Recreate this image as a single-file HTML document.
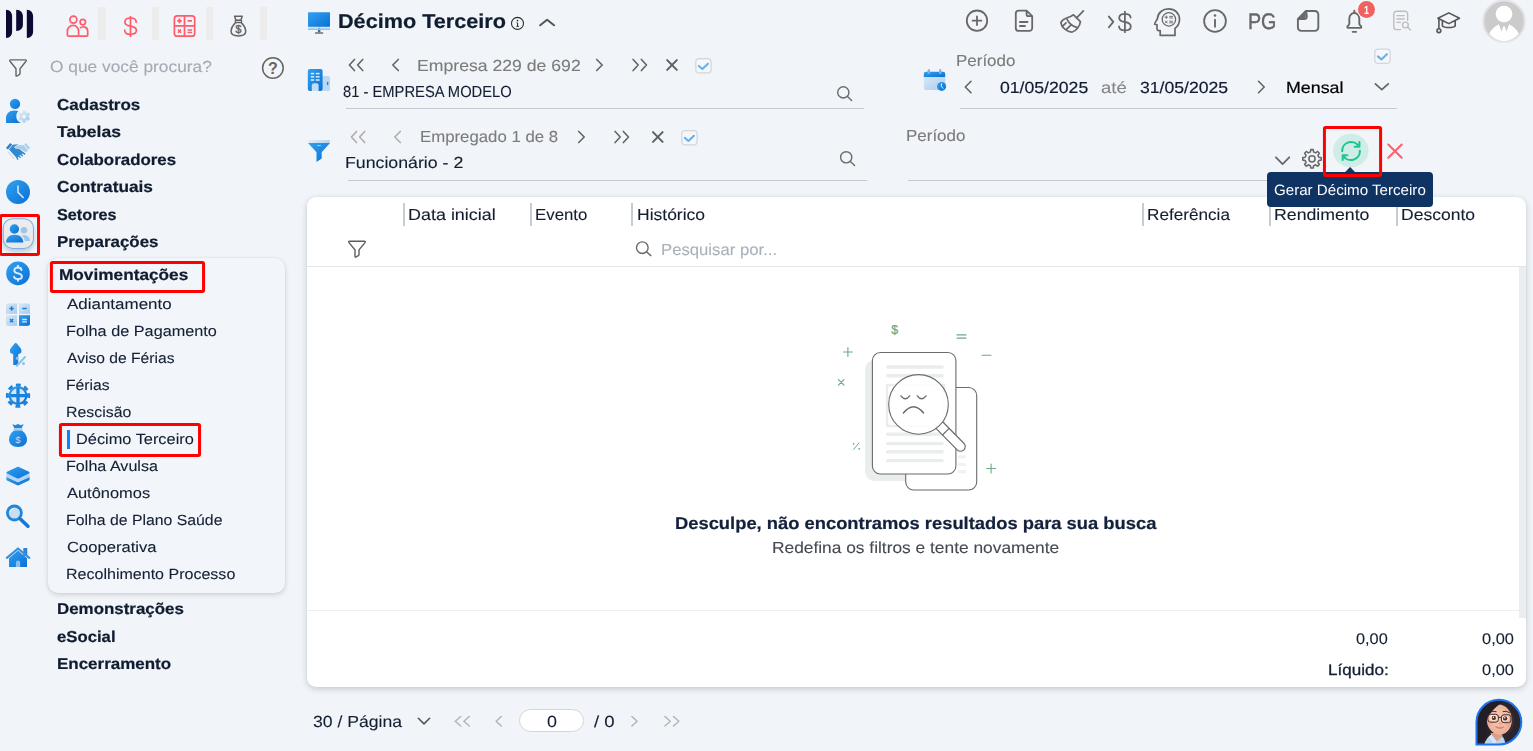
<!DOCTYPE html>
<html><head><meta charset="utf-8"><title>Décimo Terceiro</title>
<style>
html,body{margin:0;padding:0;}
body{width:1533px;height:751px;overflow:hidden;background:#f1f5f9;position:relative;font-family:"Liberation Sans",sans-serif;}
.t{text-rendering:geometricPrecision;position:absolute;white-space:nowrap;transform-origin:0 50%;z-index:4;display:block;}
</style></head><body>
<div style="position:absolute;left:47.8px;top:258px;width:237.70px;height:335.00px;background:#f2f5fa;border-radius:10px;box-shadow:0 2px 5px rgba(30,40,60,.16),0 0 2px rgba(30,40,60,.08);"></div>
<div style="position:absolute;left:307px;top:197px;width:1219.00px;height:489.50px;background:#fff;border-radius:9px;box-shadow:0 2px 6px rgba(20,30,45,.2),0 0 2px rgba(20,30,45,.06);"></div>
<div style="position:absolute;left:307px;top:266px;width:1219.00px;height:1.00px;background:#e3e6ea;"></div>
<div style="position:absolute;left:307px;top:610px;width:1212.30px;height:1.00px;background:#eceef1;"></div>
<div style="position:absolute;left:1519.3px;top:267px;width:6.70px;height:351.00px;background:#ebedf0;"></div>
<div style="position:absolute;left:403.1px;top:203.1px;width:1.80px;height:22.70px;background:#c8ccd2;"></div>
<div style="position:absolute;left:530.1px;top:203.1px;width:1.80px;height:22.70px;background:#c8ccd2;"></div>
<div style="position:absolute;left:630.9px;top:203.1px;width:1.80px;height:22.70px;background:#c8ccd2;"></div>
<div style="position:absolute;left:1142.1px;top:203.1px;width:1.80px;height:22.70px;background:#c8ccd2;"></div>
<div style="position:absolute;left:1269.0px;top:203.1px;width:1.80px;height:22.70px;background:#c8ccd2;"></div>
<div style="position:absolute;left:1396.3px;top:203.1px;width:1.80px;height:22.70px;background:#c8ccd2;"></div>
<div style="position:absolute;left:346px;top:108px;width:517.60px;height:1.00px;background:#c6cbd1;"></div>
<div style="position:absolute;left:348px;top:180px;width:518.60px;height:1.00px;background:#c6cbd1;"></div>
<div style="position:absolute;left:960px;top:108px;width:437.00px;height:1.00px;background:#c6cbd1;"></div>
<div style="position:absolute;left:908px;top:180px;width:419.00px;height:1.00px;background:#c6cbd1;"></div>
<div style="position:absolute;left:66.9px;top:430px;width:3.10px;height:18.70px;background:#0a86fa;"></div>




<div style="position:absolute;left:1267.3px;top:172.4px;width:165.70px;height:34.80px;background:#0f3363;border-radius:4px;z-index:5;"></div>
<div style="position:absolute;left:519.2px;top:709.3px;width:65.20px;height:23.20px;box-sizing:border-box;background:#fff;border:1px solid #d2d6db;border-radius:12px;"></div>
<svg width="1533" height="751" viewBox="0 0 1533 751" style="position:absolute;left:0;top:0;z-index:3;overflow:visible">
<defs>
 <linearGradient id="gb" x1="0" y1="0" x2="1" y2="1"><stop offset="0" stop-color="#31a2ef"/><stop offset="1" stop-color="#0a70d6"/></linearGradient>
 <linearGradient id="gl" x1="0" y1="0" x2="1" y2="1"><stop offset="0" stop-color="#d9e8f7"/><stop offset="1" stop-color="#a9cbeb"/></linearGradient>
 <linearGradient id="gl2" x1="0" y1="0" x2="1" y2="1"><stop offset="0" stop-color="#e2eef9"/><stop offset="1" stop-color="#a4c8e8"/></linearGradient>
 <linearGradient id="gt" x1="0" y1="0" x2="0" y2="1"><stop offset="0" stop-color="#ebedee"/><stop offset="1" stop-color="#e6e8ea"/></linearGradient>
 <filter id="sh" x="-30%" y="-30%" width="160%" height="180%"><feDropShadow dx="0" dy="2.5" stdDeviation="2.2" flood-color="#000" flood-opacity=".2"/></filter>
</defs>
<!-- logo -->
<g fill="#0c0a33">
 <path d="M6,9.8 C10.2,9.8 12.1,13.2 12.1,16.5 V31.5 C12.1,34.8 10.2,38 6,38 Z"/>
 <path d="M16.2,9.8 C20.8,9.8 22.9,13.2 22.9,16.5 V24.5 C22.9,27.8 20.8,31 16.2,31 Z"/>
 <path d="M26.8,9.8 C31,9.8 33.1,13.2 33.1,16.5 V31.5 C33.1,34.8 31,38 26.8,38 Z"/>
</g>
<!-- separators -->
<g fill="#ececec"><rect x="97.9" y="7" width="8" height="32.8"/><rect x="152" y="7" width="7" height="32.8"/><rect x="206" y="7" width="7.1" height="32.8"/><rect x="259.9" y="7" width="7" height="32.8"/></g>
<!-- red people -->
<g fill="none" stroke="#ff5b6b" stroke-width="1.7" stroke-linejoin="round">
 <circle cx="73.4" cy="19.6" r="3.5"/>
 <path d="M67.4,35 V31 a5.6,5.6 0 0 1 11.2,0 V35 a1.2,1.2 0 0 1 -1.2,1.2 H68.6 a1.2,1.2 0 0 1 -1.2,-1.2 Z"/>
 <circle cx="82.8" cy="22.1" r="2.7"/>
 <path d="M78.6,36.2 H86.5 a1.2,1.2 0 0 0 1.2,-1.2 V31.2 a4.4,4.4 0 0 0 -7.6,-3"/>
</g>
<!-- red dollar -->
<g fill="none" stroke="#ff5b6b" stroke-width="1.7" stroke-linecap="round">
 <path d="M136.2,22.2 C136.2,19.6 133.8,18 130.5,18 C127.2,18 124.9,19.7 124.9,22.2 C124.9,24.7 127.2,25.6 130.5,26.1 C133.8,26.6 136.4,27.7 136.4,30.3 C136.4,32.8 133.8,34.3 130.5,34.3 C127.2,34.3 124.7,32.8 124.7,30.2"/>
 <path d="M130.5,16.7 V36.2"/>
</g>
<!-- red calculator -->
<g fill="none" stroke="#ff5b6b" stroke-width="1.7">
 <rect x="174.4" y="15.9" width="20.3" height="20.3" rx="2.8"/>
 <path d="M184.5,15.9 V36.2 M174.4,25.9 H194.7"/>
 <path d="M177.2,20.9 H181.8 M179.5,18.6 V23.2 M187.6,20.9 H192" stroke-width="1.9"/>
 <path d="M177.9,29.4 L181.1,32.8 M181.1,29.4 L177.9,32.8 M187.5,30.1 H192.1 M187.5,32.4 H192.1" stroke-width="1.5"/>
</g>
<!-- grey money bag -->
<g fill="none" stroke="#646464" stroke-width="1.5" stroke-linejoin="round">
 <path d="M235.7,22.6 C233,25 231.1,28.5 231.1,31.6 C231.1,34.8 233.7,35.9 238.4,35.9 C243.1,35.9 245.7,34.8 245.7,31.6 C245.7,28.5 243.8,25 241.1,22.6 Z"/>
 <path d="M235.9,20.3 L234.6,16.3 H242.2 L240.9,20.3 Z"/>
 <path d="M235.3,20.4 H241.5 V22.5 H235.3 Z" stroke-width="1.2"/>
</g>
<text x="238.4" y="33.4" font-family="Liberation Sans, sans-serif" font-size="10.6" fill="#646464" stroke="#646464" stroke-width=".45" text-anchor="middle">$</text>
<!-- filter outline left -->
<path transform="translate(9,59.1)" d="M1.6,0.8 H16.4 Q17.8,0.8 17,2.1 L11,9.6 V14.4 Q11,15.2 10.3,15.6 L8.1,16.9 Q7,17.4 7,16.3 V9.6 L1,2.1 Q0.2,0.8 1.6,0.8 Z" fill="none" stroke="#646464" stroke-width="1.4" stroke-linejoin="round"/>
<!-- help -->
<circle cx="272.9" cy="68" r="10.3" fill="none" stroke="#646464" stroke-width="1.5"/>
<text x="272.9" y="73.7" font-family="Liberation Sans, sans-serif" font-size="16" font-weight="700" fill="#646464" text-anchor="middle">?</text>

<!-- person gear -->
<circle cx="15" cy="103.9" r="5.15" fill="url(#gb)"/>
<path d="M6,123 V118 C6,113.8 9.4,110.4 14,110.4 C15.8,110.4 17.2,110.6 18.3,111.1 C17,112.6 16.3,114.4 16.3,116.6 C16.3,119.6 18.2,122 21,123 Z" fill="url(#gb)"/>
<path d="M25.37,120.50 L25.23,122.19 L22.97,122.19 L22.83,120.50 L21.36,119.65 L19.82,120.37 L18.70,118.42 L20.09,117.45 L20.09,115.75 L18.70,114.78 L19.82,112.83 L21.36,113.55 L22.83,112.70 L22.97,111.01 L25.23,111.01 L25.37,112.70 L26.84,113.55 L28.38,112.83 L29.50,114.78 L28.11,115.75 L28.11,117.45 L29.50,118.42 L28.38,120.37 L26.84,119.65 Z" fill="url(#gl2)" stroke="url(#gl2)" stroke-width="1" stroke-linejoin="round"/><circle cx="24.1" cy="116.6" r="1.9" fill="#f1f5f9"/>
<!-- handshake -->
<g>
 <path d="M6,148 L10.2,143 L12.2,144.6 L8,149.6 Z" fill="#2580d3"/>
 <path d="M24.2,144.5 L25.7,143 L30.2,148 L28.6,149.6 Z" fill="#a9cfea"/>
 <path d="M14.2,147.2 L18.8,145 L23.8,145.3 L28.1,150.2 L25.8,152.2 L20,149 L16,148.6 Z" fill="#a9cfea"/>
 <path d="M9,149.6 L12.8,144.7 L18.4,144.2 L14,147 L15.2,148.5 L19.6,149.2 L25.6,153.8 L24.8,154.9 L22.4,153.4 L21.6,154.2 L23.2,155.8 L22.4,156.8 L20,154.8 L19.4,155.6 L21,157.4 L20.2,158.2 L18.2,156.4 L17.8,157.2 L18.4,159.4 L17.4,160 L16,157.2 Z" fill="#3189d2"/>
 <path d="M8.6,152.6 L9.6,154 M10.6,154.8 L11.6,156.2 M12.8,157 L13.8,158.4" stroke="#c6dff2" stroke-width="1.3" stroke-linecap="round"/>
</g>
<!-- clock -->
<circle cx="18" cy="192" r="12" fill="url(#gb)"/>
<path d="M18,186 V192.4 L23.2,197.5" fill="none" stroke="#cfe4f7" stroke-width="1.6" stroke-linecap="round" stroke-linejoin="round"/>
<!-- selected tile -->
<rect x="3.2" y="218.7" width="30.3" height="29.8" rx="9.5" fill="url(#gt)" stroke="#74b3e8" stroke-width="1.1" filter="url(#sh)"/>
<circle cx="14.4" cy="229" r="4.7" fill="url(#gb)"/>
<path d="M6,242.6 C6,238 9,234.7 14.6,234.7 C20.2,234.7 23.3,238 23.3,242.6 Z" fill="url(#gb)"/>
<circle cx="24" cy="230.3" r="3.3" fill="#9cc6ea"/>
<path d="M21.6,235.7 C22.6,235.3 23.6,235.2 24.6,235.2 C28,235.2 30,237.8 30,241 H24.8 C24.7,239 23.6,237 21.6,235.7 Z" fill="#9cc6ea"/>
<!-- dollar circle -->
<circle cx="18" cy="273.4" r="11.8" fill="url(#gb)"/>
<g fill="none" stroke="#dcedfb" stroke-width="1.9" stroke-linecap="round"><path d="M21.5,270 C21.2,268.3 19.8,267.5 18,267.5 C15.8,267.5 14.3,268.7 14.3,270.5 C14.3,272.4 15.8,273 18,273.4 C20.4,273.9 21.9,274.7 21.9,276.5 C21.9,278.2 20.2,279.1 18,279.1 C15.9,279.1 14.4,278.3 14,276.8"/><path d="M18,265.8 V267.5 M18,279.1 V280.8"/></g>
<!-- blue calculator -->
<clipPath id="calc"><rect x="6" y="303.2" width="24" height="22.7" rx="2.6"/></clipPath>
<g clip-path="url(#calc)"><rect x="6" y="303.2" width="11" height="10.7" fill="url(#gl)"/><rect x="19" y="303.2" width="11" height="10.7" fill="url(#gl)"/>
<rect x="6" y="315.2" width="11" height="10.7" fill="url(#gl)"/><rect x="19" y="315.2" width="11" height="10.7" fill="url(#gb)"/></g>
<path d="M9.4,308.5 H13.8 M11.6,306.3 V310.7 M22.3,308.5 H26.7 M10,319 L13.2,322.2 M13.2,319 L10,322.2" stroke="#1a7fd8" stroke-width="1.4" fill="none"/>
<path d="M22.2,319.5 H26.8 M22.2,321.9 H26.8" stroke="#dcebf8" stroke-width="1.4"/>
<!-- arrow up percent -->
<path d="M15.7,343 C16.2,343 17,343.6 17.6,344.4 L20.8,348.6 C21.3,349.3 21.4,349.8 21.4,350.6 V351.6 C21.4,352.6 20.8,353.2 19.8,353.6 L18.2,354.3 V364.9 H13.2 V354.3 L11.6,353.6 C10.6,353.2 10,352.6 10,351.6 V350.6 C10,349.8 10.1,349.3 10.6,348.6 L13.8,344.4 C14.4,343.6 15.2,343 15.7,343 Z" fill="url(#gb)"/>
<path d="M25,357 L16.9,365.7" stroke="#8ec3ea" stroke-width="2.1" stroke-linecap="round"/><circle cx="17.3" cy="358.2" r="1.5" fill="#8ec3ea"/><circle cx="23.5" cy="363.5" r="1.5" fill="#8ec3ea"/>
<!-- gear cross -->
<g transform="translate(18,395.6)"><circle r="10.6" fill="none" stroke="#1f86de" stroke-width="3.2" stroke-dasharray="4.7 3.625" transform="rotate(-12.7)"/><circle r="9.5" fill="url(#gb)"/><circle r="7.3" fill="#d6e7f7"/><path d="M0,-7.8 V7.8 M-7.8,0 H7.8" stroke="#1b80dc" stroke-width="3.3"/></g>
<!-- blue money bag -->
<path d="M12.4,424 L14.3,428.2 H21.7 L23.6,424 L20.9,425.3 L18,424 L15.1,425.3 Z" fill="#1f86de"/>
<rect x="13.7" y="428.3" width="8.6" height="2.1" fill="#a9cbeb"/>
<path d="M14,430.5 C10.6,433 9,436.5 9,439.6 C9,444.6 13,447 18,447 C23,447 27,444.6 27,439.6 C27,436.5 25.4,433 22,430.5 Z" fill="url(#gb)"/>
<text x="18" y="443" font-family="Liberation Sans, sans-serif" font-size="9.5" fill="#bfdaf3" text-anchor="middle">$</text>
<!-- layers -->
<path d="M6.4,476.8 L18,482.2 L29.6,476.8 V479.6 C29.6,480 29.4,480.3 29,480.5 L18.8,485.3 C18.3,485.5 17.7,485.5 17.2,485.3 L7,480.5 C6.6,480.3 6.4,480 6.4,479.6 Z" fill="url(#gb)"/>
<path d="M6.4,473.4 L18,478.8 L29.6,473.4 V476.9 L18,482.3 L6.4,476.9 Z" fill="#b4d4ef"/>
<path d="M17.2,467 C17.7,466.8 18.3,466.8 18.8,467 L29,471.8 C29.8,472.2 29.8,473.2 29,473.6 L18.8,478.4 C18.3,478.6 17.7,478.6 17.2,478.4 L7,473.6 C6.2,473.2 6.2,472.2 7,471.8 Z" fill="url(#gb)"/>
<!-- search blue -->
<circle cx="14.4" cy="513" r="7" fill="#c9def3" stroke="#1f86de" stroke-width="2.8"/>
<path d="M20.6,519.2 L27.9,526.2" stroke="#1478da" stroke-width="3.6" stroke-linecap="round"/>
<path d="M10.6,511.5 C11,510 12,509.2 13,508.8" stroke="#fff" stroke-width="1" fill="none" stroke-linecap="round"/>
<!-- home -->
<rect x="23.3" y="548" width="4" height="8" fill="#2f86d6"/>
<path d="M9,558.2 L18,550.6 L27,558.2 V567 H9 Z" fill="url(#gb)"/>
<path d="M6.9,557.9 L18,548.5 L29.3,557.9" fill="none" stroke="#3a8fdc" stroke-width="2.2" stroke-linecap="round" stroke-linejoin="round"/>
<path d="M15.9,567 V562.6 a2.1,2.1 0 0 1 4.2,0 V567 Z" fill="#8fbfe9"/>
<linearGradient id="gm" x1="0" y1="0" x2="0" y2="1"><stop offset="0" stop-color="#e6f0f9"/><stop offset="1" stop-color="#86bbe8"/></linearGradient><rect x="308" y="12.2" width="22" height="14.8" rx=".8" fill="url(#gb)"/><rect x="308" y="26.8" width="22" height="3.2" fill="url(#gm)"/><rect x="318.4" y="27.8" width="1.4" height="1" fill="#3f9ae6"/><rect x="317.9" y="30" width="2.5" height="2.4" fill="#4f6c6e"/><rect x="315" y="32.2" width="8.2" height="1.6" rx=".3" fill="#5d7778"/><circle cx="517.5" cy="23.4" r="6" fill="none" stroke="#2b2b2b" stroke-width="1.1"/><circle cx="517.5" cy="20.6" r=".85" fill="#2b2b2b"/><path d="M516.6,22.9 H517.6 V26.3 M516.4,26.4 H518.8" stroke="#2b2b2b" stroke-width="1" fill="none"/><path d="M540.15,25.30 L547.10,19.70 L554.05,25.30" fill="none" stroke="#555" stroke-width="2" stroke-linecap="round" stroke-linejoin="round"/><rect x="322" y="76" width="8" height="15" rx="1.6" fill="#bdd8f2"/><rect x="326.9" y="81.8" width="1.4" height="3.2" fill="#1f86de"/><rect x="307.8" y="68.9" width="14.8" height="22.1" rx="2" fill="url(#gb)"/><rect x="310.8" y="72.8" width="3.4" height="1.6" fill="#d6e8f8"/><rect x="315.8" y="72.8" width="3.8" height="1.6" fill="#d6e8f8"/><rect x="310.8" y="76" width="3.4" height="1.6" fill="#d6e8f8"/><rect x="315.8" y="76" width="3.8" height="1.6" fill="#d6e8f8"/><rect x="310.8" y="79.2" width="3.4" height="1.6" fill="#d6e8f8"/><rect x="315.8" y="79.2" width="3.8" height="1.6" fill="#d6e8f8"/><path d="M311.8,91 V85.6 a2.4,2.4 0 0 1 2.4,-2.4 H316.2 a2.4,2.4 0 0 1 2.4,2.4 V91 Z" fill="#c5ddf4"/><path d="M354.47,59.45 L349.40,65.00 L354.47,70.55 M362.70,59.45 L357.62,65.00 L362.70,70.55" fill="none" stroke="#646464" stroke-width="1.6" stroke-linecap="round" stroke-linejoin="round"/><path d="M398.30,59.45 L392.80,65.00 L398.30,70.55" fill="none" stroke="#646464" stroke-width="1.6" stroke-linecap="round" stroke-linejoin="round"/><path d="M596.70,59.45 L602.20,65.00 L596.70,70.55" fill="none" stroke="#646464" stroke-width="1.6" stroke-linecap="round" stroke-linejoin="round"/><path d="M633.10,59.45 L638.22,65.00 L633.10,70.55 M641.38,59.45 L646.50,65.00 L641.38,70.55" fill="none" stroke="#646464" stroke-width="1.6" stroke-linecap="round" stroke-linejoin="round"/><path d="M667.2,60.1 L676.8,69.9 M676.8,60.1 L667.2,69.9" fill="none" stroke="#5e5e5e" stroke-width="2" stroke-linecap="round" stroke-linejoin="round"/><rect x="695.80" y="58.66" width="15.3" height="14.3" rx="3.4" fill="#f4f7fb" stroke="#d3d5d8" stroke-width="1.2"/><path d="M698.90,65.96 L702.40,68.96 L707.90,63.76" fill="none" stroke="#66b1ea" stroke-width="2.1" stroke-linecap="round" stroke-linejoin="round"/><circle cx="843.3" cy="92.4" r="5.6" fill="none" stroke="#6a6a6a" stroke-width="1.4"/><path d="M847.2597979746446,96.35979797464468 L851.6,100.6" fill="none" stroke="#6a6a6a" stroke-width="1.4" stroke-linecap="round" stroke-linejoin="round"/><path d="M356.47,131.45 L351.40,137.00 L356.47,142.55 M364.70,131.45 L359.62,137.00 L364.70,142.55" fill="none" stroke="#adadad" stroke-width="1.6" stroke-linecap="round" stroke-linejoin="round"/><path d="M400.30,131.45 L394.80,137.00 L400.30,142.55" fill="none" stroke="#adadad" stroke-width="1.6" stroke-linecap="round" stroke-linejoin="round"/><path d="M578.70,131.45 L584.20,137.00 L578.70,142.55" fill="none" stroke="#646464" stroke-width="1.6" stroke-linecap="round" stroke-linejoin="round"/><path d="M615.10,131.45 L620.22,137.00 L615.10,142.55 M623.38,131.45 L628.50,137.00 L623.38,142.55" fill="none" stroke="#646464" stroke-width="1.6" stroke-linecap="round" stroke-linejoin="round"/><path d="M653,132.1 L662.6,141.9 M662.6,132.1 L653,141.9" fill="none" stroke="#5e5e5e" stroke-width="2" stroke-linecap="round" stroke-linejoin="round"/><rect x="681.80" y="130.66" width="15.3" height="14.3" rx="3.4" fill="#f4f7fb" stroke="#d3d5d8" stroke-width="1.2"/><path d="M684.90,137.96 L688.40,140.96 L693.90,135.76" fill="none" stroke="#66b1ea" stroke-width="2.1" stroke-linecap="round" stroke-linejoin="round"/><circle cx="846.2" cy="157.3" r="5.6" fill="none" stroke="#6a6a6a" stroke-width="1.4"/><path d="M850.1597979746447,161.25979797464467 L854.6,165.6" fill="none" stroke="#6a6a6a" stroke-width="1.4" stroke-linecap="round" stroke-linejoin="round"/><linearGradient id="gf" x1="0" y1="0" x2="1" y2="0"><stop offset="0" stop-color="#e4eff9"/><stop offset="1" stop-color="#b2d3ee"/></linearGradient><rect x="308" y="140.1" width="22" height="3" fill="url(#gf)"/><path d="M308,143 H330 L321.7,152.2 V158.4 L316.5,162 V152.2 Z" fill="url(#gb)"/><rect x="317.2" y="145" width="3.6" height="1.1" fill="#9fcbee"/><rect x="927.6" y="69.1" width="2.4" height="4.8" rx="1" fill="#8cbce2"/><rect x="939" y="69.1" width="2.4" height="4.8" rx="1" fill="#8cbce2"/><path d="M923.8,77.2 V73.8 a2.1,2.1 0 0 1 2.1,-2.1 H943.1 a2.1,2.1 0 0 1 2.1,2.1 V77.2 Z" fill="url(#gb)"/><path d="M923.8,77.2 H945.2 V88 a2,2 0 0 1 -2,2 H925.8 a2,2 0 0 1 -2,-2 Z" fill="url(#gl)"/><rect x="927.6" y="71.7" width="2.4" height="2.2" fill="#7fb4e0"/><rect x="939" y="71.7" width="2.4" height="2.2" fill="#7fb4e0"/><circle cx="941.6" cy="86.4" r="4.5" fill="url(#gb)"/><path d="M941.4,83.8 V86.6 L943.2,88.3" stroke="#e6f2fc" stroke-width="1" fill="none" stroke-linecap="round"/><path d="M971.00,81.25 L965.30,87.00 L971.00,92.75" fill="none" stroke="#646464" stroke-width="1.6" stroke-linecap="round" stroke-linejoin="round"/><path d="M1258.50,81.25 L1264.20,87.00 L1258.50,92.75" fill="none" stroke="#646464" stroke-width="1.6" stroke-linecap="round" stroke-linejoin="round"/><path d="M1375.35,83.90 L1381.80,89.70 L1388.25,83.90" fill="none" stroke="#646464" stroke-width="1.7" stroke-linecap="round" stroke-linejoin="round"/><rect x="1374.80" y="49.10" width="15.3" height="14.3" rx="3.4" fill="#f4f7fb" stroke="#d3d5d8" stroke-width="1.2"/><path d="M1377.90,56.40 L1381.40,59.40 L1386.90,54.20" fill="none" stroke="#66b1ea" stroke-width="2.1" stroke-linecap="round" stroke-linejoin="round"/><path d="M1275.95,157.30 L1282.60,164.10 L1289.25,157.30" fill="none" stroke="#686868" stroke-width="1.8" stroke-linecap="round" stroke-linejoin="round"/><path d="M1318.81,157.22 L1321.22,157.61 L1321.22,160.09 L1318.81,160.48 L1317.97,162.51 L1319.39,164.49 L1317.64,166.24 L1315.66,164.82 L1313.63,165.66 L1313.24,168.07 L1310.76,168.07 L1310.37,165.66 L1308.34,164.82 L1306.36,166.24 L1304.61,164.49 L1306.03,162.51 L1305.19,160.48 L1302.78,160.09 L1302.78,157.61 L1305.19,157.22 L1306.03,155.19 L1304.61,153.21 L1306.36,151.46 L1308.34,152.88 L1310.37,152.04 L1310.76,149.63 L1313.24,149.63 L1313.63,152.04 L1315.66,152.88 L1317.64,151.46 L1319.39,153.21 L1317.97,155.19 Z" fill="none" stroke="#6a6a6a" stroke-width="1.6" stroke-linecap="round" stroke-linejoin="round"/><circle cx="1312" cy="158.85" r="3.1" fill="none" stroke="#6a6a6a" stroke-width="1.6"/><ellipse cx="1350.85" cy="150.55" rx="17.8" ry="16.7" fill="#cfede6"/><path d="M1342.2,151.2 A8.9,8.9 0 0 1 1358.9,146.6 M1359.4,142 V146.7 H1354.7 M1359.9,150.8 A8.9,8.9 0 0 1 1343.2,155.4 M1342.7,160 V155.3 H1347.4" fill="none" stroke="#1fc590" stroke-width="2.1" stroke-linecap="round" stroke-linejoin="round"/><path d="M1388.3,144.5 L1401.7,157.7 M1401.7,144.5 L1388.3,157.7" fill="none" stroke="#ff616c" stroke-width="2.1" stroke-linecap="round" stroke-linejoin="round"/><circle cx="977" cy="20.7" r="10.2" fill="none" stroke="#686868" stroke-width="1.8"/><path d="M972.6,20.7 H981.4 M977,16.3 V25.1" fill="none" stroke="#686868" stroke-width="1.8" stroke-linecap="round" stroke-linejoin="round"/><path d="M1018.8,10.6 H1026.6 L1032.2,16.2 V27.9 a3,3 0 0 1 -3,3 H1018.8 a3,3 0 0 1 -3,-3 V13.6 a3,3 0 0 1 3,-3 Z M1026.6,10.6 V14.2 a2,2 0 0 0 2,2 H1032.2 M1019.9,22 H1027.6 M1019.9,26 H1025" fill="none" stroke="#686868" stroke-width="1.8" stroke-linecap="round" stroke-linejoin="round"/><path d="M1083.4,10.9 L1076.4,18.2 M1073.6,14.8 L1080.4,21.6 C1080,26.2 1076,31 1071.8,32.2 C1067,31.8 1061.6,27.8 1060.8,22.6 C1062,20.2 1064.2,18.8 1066.6,18 C1069.2,17.2 1071.6,16.2 1073.6,14.8 Z M1066.6,18 C1068,22.2 1072,26 1076.8,27.4 M1063.2,25.6 L1066,22.8 M1066.4,29.4 L1070.6,25.4" fill="none" stroke="#686868" stroke-width="1.7" stroke-linecap="round" stroke-linejoin="round"/><path d="M1108.90,16.55 L1113.30,21.90 L1108.90,27.25" fill="none" stroke="#686868" stroke-width="1.9" stroke-linecap="round" stroke-linejoin="round"/><path d="M1130.6,17.6 C1130.6,15.2 1128.2,13.8 1124.9,13.8 C1121.6,13.8 1119.2,15.4 1119.2,17.9 C1119.2,20.4 1121.6,21.4 1124.9,22 C1128.2,22.6 1130.8,23.8 1130.8,26.4 C1130.8,28.9 1128.2,30.4 1124.9,30.4 C1121.6,30.4 1119,28.9 1119,26.3 M1124.9,11.6 V32.2" fill="none" stroke="#686868" stroke-width="1.8" stroke-linecap="round" stroke-linejoin="round"/><path d="M1160.2,35.4 V30.6 H1158.6 a1.6,1.6 0 0 1 -1.6,-1.6 V24.8 L1154.6,24.2 C1154.4,23.4 1156.6,20.6 1157.4,18.6 C1158,12.6 1162.6,8.9 1168.6,8.9 C1175,8.9 1179.5,13.6 1179.5,19.4 C1179.5,23.4 1177.6,26.4 1175,28.4 V35.4 Z" fill="none" stroke="#686868" stroke-width="1.7" stroke-linecap="round" stroke-linejoin="round"/><circle cx="1168.9" cy="19.4" r="6.7" fill="none" stroke="#686868" stroke-width="1.3"/><path d="M1165,17.2 H1167.6 M1166.3,15.9 V18.5 M1169.6,16.4 H1172.6 M1169.6,18 H1172.6 M1165.3,21 L1167.3,23 M1167.3,21 L1165.3,23 M1169.6,21.2 H1172.6 M1169.6,22.8 H1172.6" fill="none" stroke="#686868" stroke-width="0.9" stroke-linecap="round" stroke-linejoin="round"/><circle cx="1215" cy="21" r="10.9" fill="none" stroke="#686868" stroke-width="1.8"/><circle cx="1215" cy="15.6" r="1.25" fill="#686868"/><path d="M1215,19.6 V26.8" fill="none" stroke="#686868" stroke-width="1.9" stroke-linecap="round" stroke-linejoin="round"/><path d="M1305.9,11 H1314.9 a3.4,3.4 0 0 1 3.4,3.4 V27.5 a3.4,3.4 0 0 1 -3.4,3.4 H1301.3 a3.4,3.4 0 0 1 -3.4,-3.4 V19 Z M1306.2,11.4 L1306.8,16.4 a2.6,2.6 0 0 1 -2.6,2.6 H1298.2" fill="none" stroke="#686868" stroke-width="1.9" stroke-linecap="round" stroke-linejoin="round"/><path d="M1299.4,18.2 L1305.6,12 L1305.9,16.2 a1.9,1.9 0 0 1 -1.9,1.9 Z" fill="#686868"/><path d="M1354.3,10.6 V12 M1349.3,24 V18.6 a5,5.6 0 0 1 10,0 V24 C1359.3,25.3 1361.3,25.8 1361.3,27 C1361.3,27.6 1360.9,27.9 1360.3,27.9 H1348.3 C1347.7,27.9 1347.3,27.6 1347.3,27 C1347.3,25.8 1349.3,25.3 1349.3,24" fill="none" stroke="#686868" stroke-width="1.9" stroke-linecap="round" stroke-linejoin="round"/><path d="M1352.6,31.8 H1356.2" fill="none" stroke="#686868" stroke-width="1.8" stroke-linecap="round" stroke-linejoin="round"/><circle cx="1366.5" cy="9.5" r="9.6" fill="#f5f8fb"/><circle cx="1366.5" cy="9.5" r="8.5" fill="#f0615f"/><path d="M1407.6,20.4 V13.8 a2.6,2.6 0 0 0 -2.6,-2.6 H1396.4 a2.6,2.6 0 0 0 -2.6,2.6 V27 a2.6,2.6 0 0 0 2.6,2.6 H1400.6 M1397,15.6 H1404.2 M1397,19 H1404.2 M1397,22.4 H1400.4" fill="none" stroke="#bdbdbd" stroke-width="1.4" stroke-linecap="round" stroke-linejoin="round"/><circle cx="1405.4" cy="25" r="2.9" fill="none" stroke="#bdbdbd" stroke-width="1.4"/><path d="M1407.450609665441,27.050609665440987 L1410.4,30" fill="none" stroke="#bdbdbd" stroke-width="1.4" stroke-linecap="round" stroke-linejoin="round"/><path d="M1437.9,18.2 L1448.8,12.9 L1459.5,18.2 L1448.8,23.6 Z M1442.4,20.8 V26 C1444.2,28 1453.4,28 1455.2,26 V20.8 M1438.9,18.9 V28.4" fill="none" stroke="#555" stroke-width="1.6" stroke-linecap="round" stroke-linejoin="round"/><circle cx="1438.9" cy="30.7" r="1.9" fill="none" stroke="#555" stroke-width="1.6"/><circle cx="1504" cy="21.2" r="20.8" fill="#cbcbcb" stroke="#e3e4e5" stroke-width="2"/><circle cx="1504" cy="14.1" r="8.3" fill="#fff"/><path d="M1489.3,33.2 C1491.5,29.4 1495,26.2 1498.8,24.2 L1501.6,31.8 L1502.8,27.6 L1504,25.8 L1505.2,27.6 L1506.4,31.8 L1509.2,24.2 C1513,26.2 1516.5,29.4 1518.7,33.2 C1515.6,38 1510,41 1504,41 C1498,41 1492.4,38 1489.3,33.2 Z" fill="#fff"/><path transform="translate(348,240.5)" d="M1.6,0.8 H16.4 Q17.8,0.8 17,2.1 L11,9.4 V14 Q11,14.8 10.3,15.2 L8.1,16.5 Q7,17 7,15.9 V9.4 L1,2.1 Q0.2,0.8 1.6,0.8 Z" fill="none" stroke="#5c5c5c" stroke-width="1.4" stroke-linejoin="round"/><circle cx="642.3" cy="247.7" r="5.8" fill="none" stroke="#6a6a6a" stroke-width="1.4"/><path d="M646.401219330882,251.80121933088196 L650.8,255.6" fill="none" stroke="#6a6a6a" stroke-width="1.4" stroke-linecap="round" stroke-linejoin="round"/><rect x="865.2" y="360" width="82.3" height="121" rx="9" fill="#e9edeb"/><rect x="905.7" y="387.5" width="71" height="102.5" rx="8" fill="#fff" stroke="#6b6b6b" stroke-width="1.1"/><rect x="957.6" y="455.2" width="8.6" height="3.2" rx="1.6" fill="#f0f2f1"/><rect x="957.6" y="463.09999999999997" width="8.6" height="3.2" rx="1.6" fill="#f0f2f1"/><rect x="957.6" y="470.0" width="8.6" height="3.2" rx="1.6" fill="#f0f2f1"/><rect x="872.4" y="352.5" width="83.5" height="121.5" rx="8" fill="#fff" stroke="#6b6b6b" stroke-width="1.1"/><rect x="886" y="365.3" width="57.8" height="3.4" rx="1.7" fill="#e9edeb"/><rect x="886" y="374.1" width="57.8" height="3.4" rx="1.7" fill="#e9edeb"/><rect x="886" y="432.6" width="57.8" height="3.4" rx="1.7" fill="#e9edeb"/><rect x="886" y="441.90000000000003" width="57.8" height="3.4" rx="1.7" fill="#e9edeb"/><rect x="886" y="450.1" width="57.8" height="3.4" rx="1.7" fill="#e9edeb"/><rect x="886" y="458.90000000000003" width="57.8" height="3.4" rx="1.7" fill="#e9edeb"/><rect x="887" y="385" width="57" height="41" fill="none" stroke="#e9edeb" stroke-width="2.4"/><g transform="translate(939.2,425) rotate(45.3)"><path d="M-0.6,-4.7 H30.3 a4.7,4.7 0 0 1 0,9.4 H-0.6" fill="#fff" stroke="#6b6b6b" stroke-width="1.15"/><path d="M9.4,-4.7 V4.7" stroke="#6b6b6b" stroke-width="1.15"/></g><circle cx="918.5" cy="404.4" r="29.8" fill="#fff" fill-opacity=".82" stroke="#6b6b6b" stroke-width="1.1"/><path d="M900.9,395.9 Q905.3,401.6 909.7,395.9 M917.3,395.9 Q921.7,401.6 926.1,395.9 M903.4,413 Q913.5,400.4 923.6,413" fill="none" stroke="#6b6b6b" stroke-width="1.4" stroke-linecap="round" stroke-linejoin="round"/><path d="M843.4,352 H852.4 M847.9,347.5 V356.5" fill="none" stroke="#6aa982" stroke-width="1.1" stroke-linecap="round" stroke-linejoin="round"/><path d="M986.6,468.5 H995.6 M991.1,464 V473" fill="none" stroke="#6aa982" stroke-width="1.1" stroke-linecap="round" stroke-linejoin="round"/><path d="M838.4,379.6 L844,385.2 M844,379.6 L838.4,385.2" fill="none" stroke="#6aa982" stroke-width="1.1" stroke-linecap="round" stroke-linejoin="round"/><path d="M957,334.9 H966 M957,338.1 H966" fill="none" stroke="#6aa982" stroke-width="1.1" stroke-linecap="round" stroke-linejoin="round"/><path d="M982,355.2 H991" fill="none" stroke="#6aa982" stroke-width="1.1" stroke-linecap="round" stroke-linejoin="round"/><path d="M859,443 L853.6,449.4" fill="none" stroke="#6aa982" stroke-width="1" stroke-linecap="round" stroke-linejoin="round"/><circle cx="853.6" cy="443.8" r=".9" fill="#6aa982"/><circle cx="859.2" cy="448.8" r=".9" fill="#6aa982"/><text x="894.7" y="333.6" font-family="Liberation Sans, sans-serif" font-size="12.4" fill="#6aa982" stroke="#6aa982" stroke-width=".25" text-anchor="middle">$</text><path d="M418.35,718.30 L424.00,723.90 L429.65,718.30" fill="none" stroke="#555" stroke-width="1.6" stroke-linecap="round" stroke-linejoin="round"/><path d="M460.73,716.55 L455.30,721.30 L460.73,726.05 M469.30,716.55 L463.88,721.30 L469.30,726.05" fill="none" stroke="#b4b4b4" stroke-width="1.5" stroke-linecap="round" stroke-linejoin="round"/><path d="M501.30,716.55 L496.10,721.30 L501.30,726.05" fill="none" stroke="#b4b4b4" stroke-width="1.5" stroke-linecap="round" stroke-linejoin="round"/><path d="M631.90,716.55 L637.10,721.30 L631.90,726.05" fill="none" stroke="#b4b4b4" stroke-width="1.5" stroke-linecap="round" stroke-linejoin="round"/><path d="M664.90,716.55 L670.33,721.30 L664.90,726.05 M673.48,716.55 L678.90,721.30 L673.48,726.05" fill="none" stroke="#b4b4b4" stroke-width="1.5" stroke-linecap="round" stroke-linejoin="round"/><clipPath id="avc"><path d="M1476.5,744.6 V722 a22.4,22.4 0 1 1 22.4,22.6 Z"/></clipPath>
<radialGradient id="skin" cx=".45" cy=".45" r=".65"><stop offset="0" stop-color="#f8cdb6"/><stop offset="1" stop-color="#e9a98e"/></radialGradient>
<linearGradient id="hair" x1="0" y1="0" x2="1" y2="0"><stop offset="0" stop-color="#241f27"/><stop offset=".7" stop-color="#2c2730"/><stop offset="1" stop-color="#5a4d55"/></linearGradient>
<g clip-path="url(#avc)">
<rect x="1474" y="697" width="50" height="50" fill="url(#hair)"/>
<path d="M1490.6,733 L1502,733 L1503,741.5 L1493.5,743.5 Z" fill="#dc9f86"/>
<path d="M1483.5,746 C1485.5,740 1488.5,736 1491.4,734.6 L1496.8,741.6 L1502.6,736.6 C1504.4,739 1505.4,742 1505.6,746 Z" fill="#bcd4f0"/>
<path d="M1491.4,734.6 L1496.8,741.6 L1494,744 L1488.6,737.4 Z" fill="#d8e6f7"/>
<ellipse cx="1499.3" cy="719.6" rx="12.5" ry="15.1" fill="url(#skin)" transform="rotate(-6 1499.3 719.6)"/>
<path d="M1503.4,701.6 C1497.6,705.6 1491.4,710.6 1487.4,718.4 C1485.6,722 1485.8,727 1487.4,731 L1484,740 L1476,744 V716 L1482,704 L1494,698.6 Z" fill="#231e26"/>
<path d="M1503.4,701.6 C1505.8,705.8 1509.6,708.6 1512.8,714.6 C1514.4,718.6 1514.2,724 1512.6,728.6 C1512,732 1509,736 1506,738.6 L1512,742 L1521,734 L1523,716 L1515,703 Z" fill="#2a252d"/>
<ellipse cx="1493.4" cy="717.7" rx="3.3" ry="2.9" fill="#fbf3ee"/><ellipse cx="1505.4" cy="718.2" rx="3.2" ry="2.9" fill="#fbf3ee"/>
<circle cx="1493.8" cy="717.9" r="2.2" fill="#5b3122"/><circle cx="1505.2" cy="718.4" r="2.2" fill="#5b3122"/>
<circle cx="1493.4" cy="717.3" r=".7" fill="#fff"/><circle cx="1504.8" cy="717.8" r=".7" fill="#fff"/>
<rect x="1487.8" y="714.3" width="10.6" height="7.9" rx="2.6" fill="none" stroke="#4b2b2e" stroke-width="1"/>
<rect x="1501.4" y="714.8" width="9.6" height="7.9" rx="2.6" fill="none" stroke="#4b2b2e" stroke-width="1"/>
<path d="M1498.4,717.2 L1501.4,717.5" stroke="#4b2b2e" stroke-width="1"/>
<path d="M1489.6,712.4 Q1493,710.4 1496.6,711.8 M1502.8,711.6 Q1506.2,710.4 1509.8,712.8" stroke="#2a2026" stroke-width=".9" fill="none"/>
<ellipse cx="1500.3" cy="723.7" rx="1.5" ry="1.1" fill="#e7988a"/>
<path d="M1495.4,726.6 Q1499.6,730.4 1504,726.9 Q1499.6,728.2 1495.4,726.6 Z" fill="#cf7d76" stroke="#cf7d76" stroke-width=".6"/>
<circle cx="1489.6" cy="724.6" r="2.4" fill="#f08f86" fill-opacity=".28"/><circle cx="1509" cy="725" r="2.2" fill="#f08f86" fill-opacity=".28"/>
</g>
<path d="M1476.5,744.6 V722 a22.4,22.4 0 1 1 22.4,22.6 Z" fill="none" stroke="#1d74ea" stroke-width="2"/></svg>
<svg width="1533" height="751" viewBox="0 0 1533 751" style="position:absolute;left:0;top:0;z-index:7;overflow:visible"><path d="M1344.5,172.8 L1350.1,167.1 L1355.7,172.8 Z" fill="#0f3363"/><rect x="0.5" y="215.5" width="38.00" height="39.00" rx="1.2" fill="none" stroke="#fe0000" stroke-width="3.0"/><rect x="51.4" y="262.4" width="152.15" height="29.15" rx="1.2" fill="none" stroke="#fe0000" stroke-width="3.0"/><rect x="60.43" y="424.43" width="139.11" height="30.97" rx="1.2" fill="none" stroke="#fe0000" stroke-width="3.0"/><rect x="1324.43" y="127.5" width="56.16" height="47.90" rx="1.2" fill="none" stroke="#fe0000" stroke-width="3.0"/></svg>
<span class="t" style="left:57.13px;top:95.03px;font-size:15.8px;line-height:21px;font-weight:700;color:#101c30;transform:scaleX(1.0783);-webkit-text-stroke:0.22px #101c30;">Cadastros</span>
<span class="t" style="left:56.96px;top:122.04px;font-size:15.8px;line-height:21px;font-weight:700;color:#101c30;transform:scaleX(1.1081);-webkit-text-stroke:0.22px #101c30;">Tabelas</span>
<span class="t" style="left:57.13px;top:149.65px;font-size:15.8px;line-height:21px;font-weight:700;color:#101c30;transform:scaleX(1.0682);-webkit-text-stroke:0.22px #101c30;">Colaboradores</span>
<span class="t" style="left:57.12px;top:176.64px;font-size:15.8px;line-height:21px;font-weight:700;color:#101c30;transform:scaleX(1.0929);-webkit-text-stroke:0.22px #101c30;">Contratuais</span>
<span class="t" style="left:57.35px;top:204.64px;font-size:15.8px;line-height:21px;font-weight:700;color:#101c30;transform:scaleX(1.0277);-webkit-text-stroke:0.22px #101c30;">Setores</span>
<span class="t" style="left:56.83px;top:231.63px;font-size:15.8px;line-height:21px;font-weight:700;color:#101c30;transform:scaleX(1.0701);-webkit-text-stroke:0.22px #101c30;">Preparações</span>
<span class="t" style="left:58.71px;top:264.63px;font-size:15.8px;line-height:21px;font-weight:700;color:#101c30;transform:scaleX(1.0903);-webkit-text-stroke:0.22px #101c30;">Movimentações</span>
<span class="t" style="left:56.83px;top:599.02px;font-size:15.8px;line-height:21px;font-weight:700;color:#101c30;transform:scaleX(1.0706);-webkit-text-stroke:0.22px #101c30;">Demonstrações</span>
<span class="t" style="left:57.20px;top:626.65px;font-size:15.8px;line-height:21px;font-weight:700;color:#101c30;transform:scaleX(1.0579);-webkit-text-stroke:0.22px #101c30;">eSocial</span>
<span class="t" style="left:56.83px;top:653.52px;font-size:15.8px;line-height:21px;font-weight:700;color:#101c30;transform:scaleX(1.0740);-webkit-text-stroke:0.22px #101c30;">Encerramento</span>
<span class="t" style="left:67.39px;top:295.97px;font-size:14.7px;line-height:19px;font-weight:400;color:#131e32;transform:scaleX(1.1544);-webkit-text-stroke:0.1px #131e32;">Adiantamento</span>
<span class="t" style="left:66.39px;top:322.68px;font-size:14.7px;line-height:19px;font-weight:400;color:#131e32;transform:scaleX(1.1064);-webkit-text-stroke:0.1px #131e32;">Folha de Pagamento</span>
<span class="t" style="left:67.40px;top:350.07px;font-size:14.7px;line-height:19px;font-weight:400;color:#131e32;transform:scaleX(1.0643);-webkit-text-stroke:0.1px #131e32;">Aviso de Férias</span>
<span class="t" style="left:66.43px;top:377.48px;font-size:14.7px;line-height:19px;font-weight:400;color:#131e32;transform:scaleX(1.0689);-webkit-text-stroke:0.1px #131e32;">Férias</span>
<span class="t" style="left:66.42px;top:404.08px;font-size:14.7px;line-height:19px;font-weight:400;color:#131e32;transform:scaleX(1.0809);-webkit-text-stroke:0.1px #131e32;">Rescisão</span>
<span class="t" style="left:75.70px;top:430.98px;font-size:14.7px;line-height:19px;font-weight:400;color:#131e32;transform:scaleX(1.1130);-webkit-text-stroke:0.1px #131e32;">Décimo Terceiro</span>
<span class="t" style="left:66.40px;top:457.68px;font-size:14.7px;line-height:19px;font-weight:400;color:#131e32;transform:scaleX(1.0969);-webkit-text-stroke:0.1px #131e32;">Folha Avulsa</span>
<span class="t" style="left:67.40px;top:484.97px;font-size:14.7px;line-height:19px;font-weight:400;color:#131e32;transform:scaleX(1.1194);-webkit-text-stroke:0.1px #131e32;">Autônomos</span>
<span class="t" style="left:66.42px;top:512.08px;font-size:14.7px;line-height:19px;font-weight:400;color:#131e32;transform:scaleX(1.0761);-webkit-text-stroke:0.1px #131e32;">Folha de Plano Saúde</span>
<span class="t" style="left:66.92px;top:538.67px;font-size:14.7px;line-height:19px;font-weight:400;color:#131e32;transform:scaleX(1.1313);-webkit-text-stroke:0.1px #131e32;">Cooperativa</span>
<span class="t" style="left:66.40px;top:566.08px;font-size:14.7px;line-height:19px;font-weight:400;color:#131e32;transform:scaleX(1.0915);-webkit-text-stroke:0.1px #131e32;">Recolhimento Processo</span>
<span class="t" style="left:50.09px;top:57.36px;font-size:16px;line-height:21px;font-weight:400;color:#a4aab3;transform:scaleX(1.0832);-webkit-text-stroke:0.1px #a4aab3;">O que você procura?</span>
<span class="t" style="left:337.65px;top:8.56px;font-size:20.1px;line-height:26px;font-weight:700;color:#101c30;transform:scaleX(1.0765);-webkit-text-stroke:0.22px #101c30;">Décimo Terceiro</span>
<span class="t" style="left:417.35px;top:56.17px;font-size:16px;line-height:21px;font-weight:400;color:#7b7b7b;transform:scaleX(1.1020);-webkit-text-stroke:0.1px #7b7b7b;">Empresa 229 de 692</span>
<span class="t" style="left:343.37px;top:81.96px;font-size:16px;line-height:21px;font-weight:400;color:#131e32;transform:scaleX(0.9213);-webkit-text-stroke:0.1px #131e32;">81 - EMPRESA MODELO</span>
<span class="t" style="left:419.92px;top:127.36px;font-size:16px;line-height:21px;font-weight:400;color:#7b7b7b;transform:scaleX(1.0487);-webkit-text-stroke:0.1px #7b7b7b;">Empregado 1 de 8</span>
<span class="t" style="left:344.67px;top:152.96px;font-size:16px;line-height:21px;font-weight:400;color:#131e32;transform:scaleX(1.1080);-webkit-text-stroke:0.1px #131e32;">Funcionário - 2</span>
<span class="t" style="left:956.11px;top:50.96px;font-size:16px;line-height:21px;font-weight:400;color:#7a7a7a;transform:scaleX(1.0596);-webkit-text-stroke:0.1px #7a7a7a;">Período</span>
<span class="t" style="left:1000.21px;top:78.17px;font-size:16px;line-height:21px;font-weight:400;color:#101c30;transform:scaleX(1.1015);-webkit-text-stroke:.18px #101c30;">01/05/2025</span>
<span class="t" style="left:1101.38px;top:78.16px;font-size:16px;line-height:21px;font-weight:400;color:#858585;transform:scaleX(1.1575);-webkit-text-stroke:0.1px #858585;">até</span>
<span class="t" style="left:1140.08px;top:78.17px;font-size:16px;line-height:21px;font-weight:400;color:#101c30;transform:scaleX(1.1006);-webkit-text-stroke:.18px #101c30;">31/05/2025</span>
<span class="t" style="left:1285.94px;top:77.97px;font-size:16px;line-height:21px;font-weight:400;color:#000;transform:scaleX(1.1136);-webkit-text-stroke:.22px #000;">Mensal</span>
<span class="t" style="left:906.21px;top:125.56px;font-size:16px;line-height:21px;font-weight:400;color:#7a7a7a;transform:scaleX(1.0596);-webkit-text-stroke:0.1px #7a7a7a;">Período</span>
<span class="t" style="left:1274.24px;top:180.97px;font-size:15px;line-height:20px;font-weight:400;color:#fff;transform:scaleX(1.0079);z-index:6;">Gerar Décimo Terceiro</span>
<span class="t" style="left:408.13px;top:204.96px;font-size:16px;line-height:21px;font-weight:400;color:#131e32;transform:scaleX(1.1214);-webkit-text-stroke:0.1px #131e32;">Data inicial</span>
<span class="t" style="left:535.42px;top:204.96px;font-size:16px;line-height:21px;font-weight:400;color:#131e32;transform:scaleX(1.0512);-webkit-text-stroke:0.1px #131e32;">Evento</span>
<span class="t" style="left:636.76px;top:204.97px;font-size:16px;line-height:21px;font-weight:400;color:#131e32;transform:scaleX(1.0934);-webkit-text-stroke:0.1px #131e32;">Histórico</span>
<span class="t" style="left:1147.09px;top:204.97px;font-size:16px;line-height:21px;font-weight:400;color:#131e32;transform:scaleX(1.0723);-webkit-text-stroke:0.1px #131e32;">Referência</span>
<span class="t" style="left:1274.25px;top:204.97px;font-size:16px;line-height:21px;font-weight:400;color:#131e32;transform:scaleX(1.1066);-webkit-text-stroke:0.1px #131e32;">Rendimento</span>
<span class="t" style="left:1401.36px;top:204.96px;font-size:16px;line-height:21px;font-weight:400;color:#131e32;transform:scaleX(1.0955);-webkit-text-stroke:0.1px #131e32;">Desconto</span>
<span class="t" style="left:660.63px;top:239.56px;font-size:16px;line-height:21px;font-weight:400;color:#aab0b9;transform:scaleX(1.0441);-webkit-text-stroke:0.1px #aab0b9;">Pesquisar por...</span>
<span class="t" style="left:675.15px;top:511.65px;font-size:17.2px;line-height:22px;font-weight:700;color:#14213d;transform:scaleX(1.0677);-webkit-text-stroke:0.22px #14213d;">Desculpe, não encontramos resultados para sua busca</span>
<span class="t" style="left:772.18px;top:537.96px;font-size:16px;line-height:21px;font-weight:400;color:#454a52;transform:scaleX(1.0836);-webkit-text-stroke:0.1px #454a52;">Redefina os filtros e tente novamente</span>
<span class="t" style="left:1356.00px;top:630.00px;font-size:15.4px;line-height:20px;font-weight:400;color:#131e32;transform:scaleX(1.0609);-webkit-text-stroke:0.1px #131e32;">0,00</span>
<span class="t" style="left:1481.80px;top:629.73px;font-size:15.4px;line-height:20px;font-weight:400;color:#131e32;transform:scaleX(1.0678);-webkit-text-stroke:0.1px #131e32;">0,00</span>
<span class="t" style="left:1327.82px;top:660.98px;font-size:15.4px;line-height:20px;font-weight:400;color:#131e32;transform:scaleX(1.1078);-webkit-text-stroke:.3px #131e32;">Líquido:</span>
<span class="t" style="left:1481.80px;top:660.98px;font-size:15.4px;line-height:20px;font-weight:400;color:#131e32;transform:scaleX(1.0678);-webkit-text-stroke:0.1px #131e32;">0,00</span>
<span class="t" style="left:313.18px;top:711.97px;font-size:16px;line-height:21px;font-weight:400;color:#131e32;transform:scaleX(1.1003);-webkit-text-stroke:0.1px #131e32;">30 / Página</span>
<span class="t" style="left:546.80px;top:711.97px;font-size:16px;line-height:21px;font-weight:400;color:#131e32;transform:scaleX(1.1187);-webkit-text-stroke:0.1px #131e32;">0</span>
<span class="t" style="left:594.00px;top:711.97px;font-size:16px;line-height:21px;font-weight:400;color:#131e32;transform:scaleX(1.1626);-webkit-text-stroke:0.1px #131e32;">/ 0</span>
<span class="t" style="left:1248.06px;top:7.02px;font-size:22.5px;line-height:29px;font-weight:400;color:#666;transform:scaleX(0.8738);-webkit-text-stroke:.4px #666;">PG</span>
<span class="t" style="left:1363.77px;top:4.07px;font-size:11.5px;line-height:15px;font-weight:700;color:#fff;transform:scaleX(0.7724);z-index:6;">1</span>
</body></html>
